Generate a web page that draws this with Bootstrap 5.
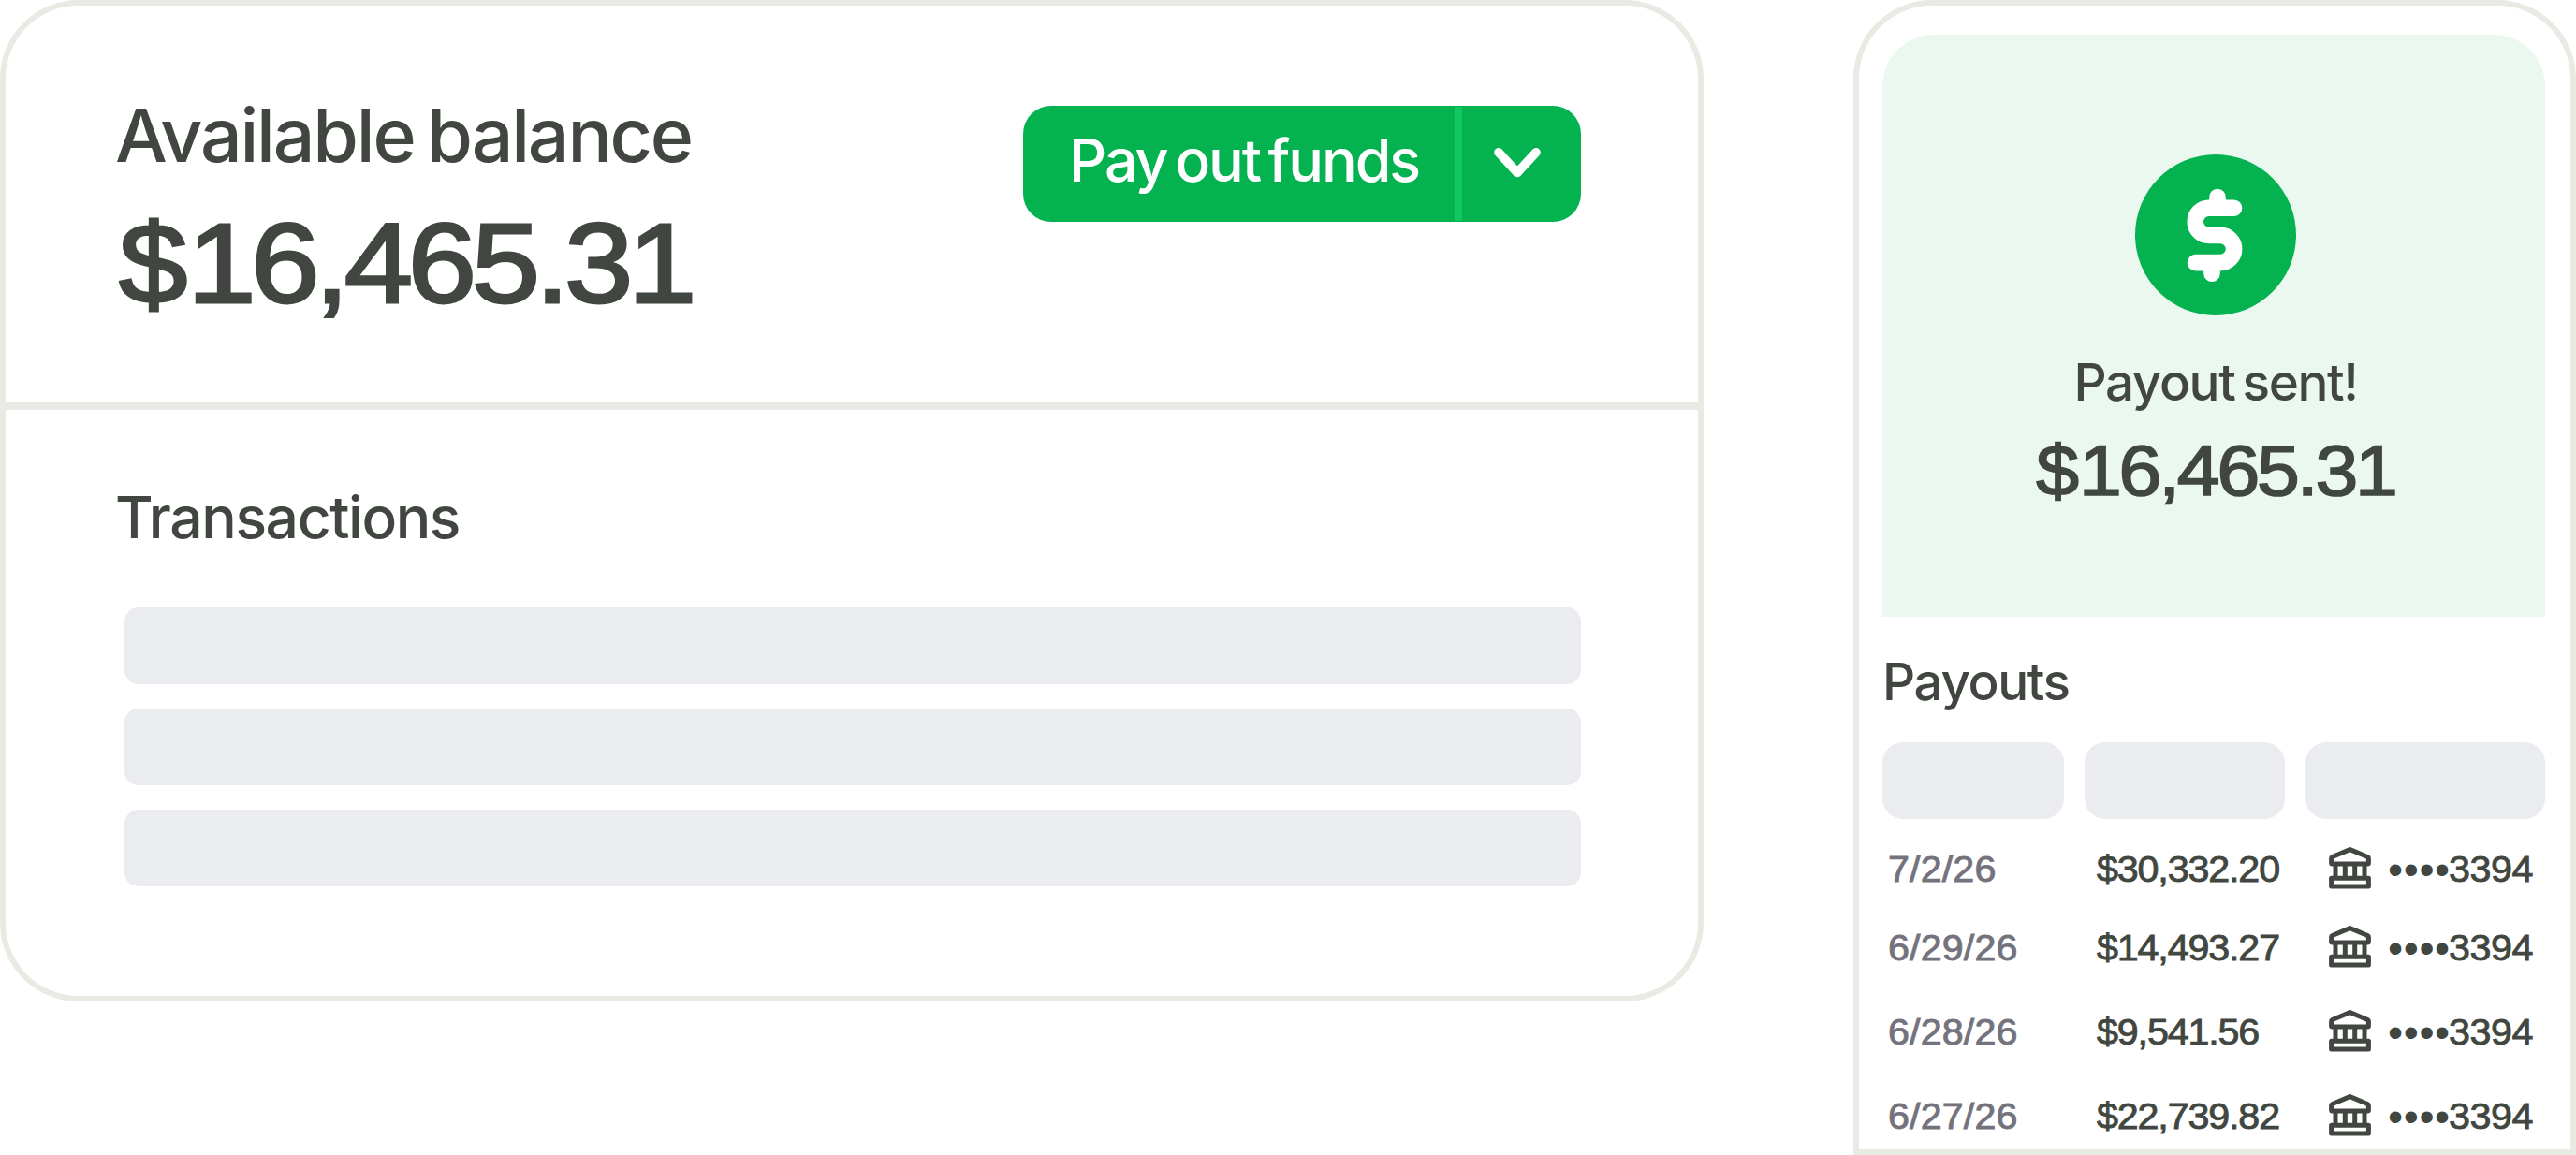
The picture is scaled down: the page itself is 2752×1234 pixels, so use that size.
<!DOCTYPE html>
<html lang="en">

<head>
    <meta charset="utf-8">
    <title>Payouts</title>
    <link rel="stylesheet" href="https://cdn.jsdelivr.net/npm/bootstrap@5.3.0/dist/css/bootstrap.min.css">
    <style>
        body {
            width: 2752px;
            height: 1234px;
            overflow: hidden;
            background: #fff;
            color: #414740;
            font-family: Inter, "Liberation Sans", Arial, sans-serif;
            font-weight: 500;
        }

        /* wide, slightly heavy figures */
        .figures {
            display: inline-block;
            font-family: "Liberation Sans", Arial, sans-serif;
            font-weight: 400;
            transform: scaleX(1.09);
            transform-origin: left;
            -webkit-text-stroke: .023em currentColor;
        }

        .panel {
            --bs-card-border-width: 6px;
            --bs-card-border-color: #e8ebe3;
            --bs-card-border-radius: 84px;
            --bs-card-color: #414740;
        }

        .balance-panel { width: 1820px; height: 1070px; }
        .balance-top { height: 432px; padding: 91px 125px 0 117px; border-bottom: 8px solid #e8ebe3; }
        .balance-label { font-size: 78.8px; line-height: 96px; letter-spacing: -2.2px; word-spacing: -5px; margin-bottom: 18px; }
        .balance-total { font-size: 121px; line-height: 140px; letter-spacing: -4.9px; margin-left: 4px; }
        .balance-total::first-letter { letter-spacing: 0; }

        .payout-btn { height: 124px; margin-top: 16px; border-radius: 30px; overflow: hidden; background: #05b250; }
        .payout-btn .btn { --bs-btn-color: #fff; --bs-btn-border-width: 0; --bs-btn-border-radius: 0; --bs-btn-font-weight: 500; }
        .btn-main { width: 461px; padding: 0 0 8px 49px; font-size: 62.8px; letter-spacing: -2.1px; word-spacing: -6px; text-align: left; white-space: nowrap; }
        .btn-line { width: 8px; margin: 1px 0; background: #10c760; }
        .btn-arrow { width: 127px; }
        .btn-arrow svg { margin: 0 9px 2px 0; }

        .trans { padding: 77px 125px 0 117px; }
        .trans h2 { font-size: 62.4px; line-height: 76px; letter-spacing: -1.4px; margin-bottom: 58px; }
        .trans-list { margin-left: 10px; gap: 26px; }
        .bar { height: 82px; border-radius: 15px; background: #ebecf0; }

        .phone-panel { width: 772px; height: 1234px; padding: 31px 27px 0 25px; border-radius: 84px 84px 0 0; }
        .hero { height: 622px; padding: 128px 0 0 4px; border-radius: 55px 55px 0 0; background: #ebf8ef; }
        .hero-label { font-size: 54.8px; line-height: 66px; letter-spacing: -1.4px; word-spacing: -5px; margin: 38px 0 17px; }
        .hero-total { font-size: 75.5px; line-height: 90px; letter-spacing: -2.9px; transform-origin: center; }
        .hero-total::first-letter { letter-spacing: 0; }
        .phone-panel h2 { font-size: 54.8px; line-height: 66px; letter-spacing: -1.4px; margin: 36px 0 32px; }

        .pills { grid-template-columns: 194px 214px 256px; gap: 22px; margin-bottom: 29px; }
        .pills .bar { border-radius: 22px; }
        .payout-line { grid-template-columns: 223px 248px 63px 65px auto; height: 48px; padding-left: 6px; margin-bottom: 42px; font-size: 38.5px; line-height: 48px; white-space: nowrap; }
        .payout-line:first-child { margin-bottom: 36px; }
        .payout-line svg { margin-top: 1px; }
        .payout-line .figures { transform: scaleX(1.07); letter-spacing: -1.05px; }
        .payout-line .payout-date { color: #74727d; letter-spacing: .15px; }
        .payout-line .acct-num { letter-spacing: -.4px; }
        .acct-dots { font-family: "Liberation Sans", Arial, sans-serif; font-weight: 400; font-size: 46px; line-height: 51px; letter-spacing: .6px; }
    </style>
</head>

<body>
    <div class="d-flex justify-content-between align-items-start">
        <div class="card panel balance-panel">
            <div class="balance-top d-flex justify-content-between align-items-start">
                <div>
                    <div class="balance-label">Available balance</div>
                    <div class="balance-total figures">$16,465.31</div>
                </div>
                <div class="payout-btn d-flex">
                    <button class="btn btn-main">Pay out funds</button>
                    <span class="btn-line"></span>
                    <button class="btn btn-arrow p-0 d-flex align-items-center justify-content-center">
                        <svg width="50" height="34" viewBox="0 0 50 34" fill="none" stroke="#fff" stroke-width="9.6" stroke-linecap="round" stroke-linejoin="round">
                            <path d="M5 5.8 25 27.5 45 5.8" />
                        </svg>
                    </button>
                </div>
            </div>
            <div class="trans">
                <h2>Transactions</h2>
                <div class="trans-list d-flex flex-column">
                    <div class="bar"></div>
                    <div class="bar"></div>
                    <div class="bar"></div>
                </div>
            </div>
        </div>

        <div class="card panel phone-panel">
            <div class="hero d-flex flex-column align-items-center flex-shrink-0">
                <svg width="172" height="172" viewBox="11 15 172 172" fill="none">
                    <circle cx="97" cy="101" r="86" fill="#05b250" />
                    <path d="M116.5 72.2H89.8a14.6 14.6 0 0 0 0 29.2H102a14.6 14.6 0 0 1 0 29.2H75.5M99 60.5V72M93 130.6V142.2" stroke="#fff" stroke-width="17.6" stroke-linecap="round" />
                </svg>
                <div class="hero-label">Payout sent!</div>
                <div class="hero-total figures">$16,465.31</div>
            </div>
            <h2>Payouts</h2>
            <div class="pills d-grid">
                <div class="bar"></div>
                <div class="bar"></div>
                <div class="bar"></div>
            </div>
            <div id="payoutRows"></div>
        </div>
    </div>

    <script src="https://cdn.jsdelivr.net/npm/bootstrap@5.3.0/dist/js/bootstrap.bundle.min.js"></script>
    <script>
        const payouts = [
            { date: '7/2/26', amount: '$30,332.20', account: '3394' },
            { date: '6/29/26', amount: '$14,493.27', account: '3394' },
            { date: '6/28/26', amount: '$9,541.56', account: '3394' },
            { date: '6/27/26', amount: '$22,739.82', account: '3394' }
        ];

        const rows = document.getElementById('payoutRows');

        payouts.forEach(p => {
            rows.innerHTML += `
            <div class="payout-line d-grid">
                <span><span class="figures payout-date">${p.date}</span></span>
                <span><span class="figures">${p.amount}</span></span>
                <svg width="45" height="45" viewBox="0 0 45 45" fill="none" stroke="#414740" stroke-width="5" stroke-linejoin="round">
                    <path d="M2.6 12.2Q2.6 11 3.7 10.5L22.5 2.6 41.3 10.5Q42.4 11 42.4 12.2V17Q42.4 18 41.4 18H3.6Q2.6 18 2.6 17Z" />
                    <path d="M7 18V33M17.3 18V33M27.7 18V33M38 18V33" />
                    <path d="M2.6 33.2H42.4V41.9H2.6Z" />
                </svg>
                <span class="acct-dots">••••</span>
                <span><span class="figures acct-num">${p.account}</span></span>
            </div>`;
        });
    </script>
</body>

</html>
